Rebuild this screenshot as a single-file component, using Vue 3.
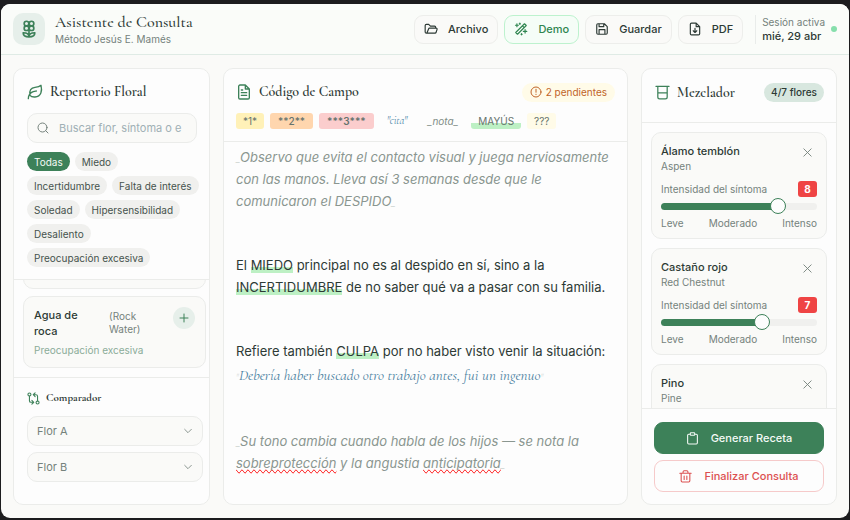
<script setup>
import { ref, reactive } from 'vue'

const actions = [
  { label: 'Archivo', icon: 'folder' },
  { label: 'Demo', icon: 'wand', active: true },
  { label: 'Guardar', icon: 'save' },
  { label: 'PDF', icon: 'pdf' },
]
const filters = ['Todas', 'Miedo', 'Incertidumbre', 'Falta de interés', 'Soledad', 'Hipersensibilidad', 'Desaliento', 'Preocupación excesiva']
const activeFilter = ref('Todas')
const legend = [
  { text: '*1*', kind: 'one' },
  { text: '**2**', kind: 'two' },
  { text: '***3***', kind: 'three' },
  { text: '"cita"', kind: 'quote' },
  { text: '_nota_', kind: 'note' },
  { text: 'MAYÚS', kind: 'caps' },
  { text: '???', kind: 'ask' },
]
const mix = reactive([
  { id: 'aspen', name: 'Álamo temblón', latin: 'Aspen', value: 8 },
  { id: 'chestnut', name: 'Castaño rojo', latin: 'Red Chestnut', value: 7 },
  { id: 'pine', name: 'Pino', latin: 'Pine', value: null },
])
const fill = (v) => ({ '--fill': ((v - 1) / 9) * 100 + '%' })
</script>

<template>
  <div class="desktop">
    <div class="app">
      <header class="topbar">
        <span class="logo">
          <svg class="icon" width="20" height="20" viewBox="0 0 24 24">
            <circle cx="9" cy="5.5" r="2.8" /><circle cx="15" cy="5.5" r="2.8" />
            <circle cx="9" cy="11" r="2.8" /><circle cx="15" cy="11" r="2.8" />
            <path d="M12 13v8.500M12 21.500c-4.500 0-7-1.500-7-5 4 0 7 1.500 7 5zM12 21.500c4.500 0 7-1.500 7-5-4 0-7 1.500-7 5z" />
          </svg>
        </span>
        <div class="brand">
          <h1>Asistente de Consulta</h1>
          <p>Método Jesús E. Mamés</p>
        </div>
        <nav class="actions">
          <button v-for="a in actions" :key="a.label" type="button" class="action" :class="{ active: a.active }">
            <svg class="icon" width="14" height="14" viewBox="0 0 24 24">
              <path v-if="a.icon === 'folder'" d="M5 19l3-7.500a1.500 1.500 0 0 1 1.300-.9H21a1.500 1.500 0 0 1 1.400 2l-1.600 5a2 2 0 0 1-1.900 1.400H4a2 2 0 0 1-2-2V6a2 2 0 0 1 2-2h4l3 3h7a2 2 0 0 1 2 2v1.500" />
              <path v-else-if="a.icon === 'wand'" d="M3 18L18 3l3 3L6 21zM14.500 6.500l3 3M5 3v5M2.500 5.500h5M19 13v6M16 16h6M10 2v2M9 3h2M13 20v2M12 21h2" />
              <path v-else-if="a.icon === 'save'" d="M5 3h11l5 5v11a2 2 0 0 1-2 2H5a2 2 0 0 1-2-2V5a2 2 0 0 1 2-2zM7 3v5h8V3M7 21v-8h10v8" />
              <path v-else d="M14 2H6a2 2 0 0 0-2 2v16a2 2 0 0 0 2 2h12a2 2 0 0 0 2-2V8zM14 2v6h6M12 11v7M9 15l3 3 3-3" />
            </svg>
            {{ a.label }}
          </button>
        </nav>
        <div class="session">
          <div>
            <p>Sesión activa</p>
            <strong>mié, 29 abr</strong>
          </div>
          <span class="dot"></span>
        </div>
      </header>

      <main class="board">
        <section class="panel">
          <div class="finder">
            <h2>
              <svg class="icon" width="16" height="16" viewBox="0 0 24 24">
                <path d="M2 22c0-4 2-7.500 5-9.500 2-1.300 4-1.500 7-2M4.500 17C3 10 6 5.500 12 5c4-.3 7-1 9-3 2 8 .5 17-9 17.500-3.500.2-6-.5-7.500-2.500z" />
              </svg>
              Repertorio Floral
            </h2>
            <label class="search">
              <svg class="icon" width="12" height="12" viewBox="0 0 24 24"><circle cx="11" cy="11" r="9" /><path d="M17.500 17.500L22 22" /></svg>
              <input type="text" placeholder="Buscar flor, síntoma o e" aria-label="Buscar flor" />
            </label>
            <div class="chips">
              <button v-for="f in filters" :key="f" type="button" :class="{ on: f === activeFilter }" @click="activeFilter = f">{{ f }}</button>
            </div>
          </div>
          <div class="flowers">
            <div class="flower passed"></div>
            <article class="flower">
              <div class="names">
                <h3>Agua de roca</h3>
                <span>(Rock Water)</span>
                <button type="button" aria-label="Añadir">
                  <svg class="icon" width="12" height="12" viewBox="0 0 24 24"><path d="M12 4v16M4 12h16" /></svg>
                </button>
              </div>
              <p>Preocupación excesiva</p>
            </article>
          </div>
          <div class="compare">
            <h4>
              <svg class="icon" width="13" height="13" viewBox="0 0 24 24">
                <circle cx="4.500" cy="4.500" r="2.800" /><circle cx="19.500" cy="19.500" r="2.800" />
                <path d="M4.500 7.500V16a3 3 0 0 0 3 3H12M9 15.500l3.500 3.500L9 22.500M19.500 16.500V8a3 3 0 0 0-3-3H12M15 1.500L11.500 5 15 8.500" />
              </svg>
              Comparador
            </h4>
            <div v-for="s in ['Flor A', 'Flor B']" :key="s" class="pick">
              <select :aria-label="s"><option>{{ s }}</option></select>
              <svg class="icon" width="10" height="10" viewBox="0 0 24 24"><path d="M4 8l8 8 8-8" /></svg>
            </div>
          </div>
        </section>

        <section class="panel">
          <div class="codehead">
            <div class="titlebar">
              <h2>
                <svg class="icon" width="16" height="16" viewBox="0 0 24 24">
                  <path d="M14 1.500H6a2 2 0 0 0-2 2v17a2 2 0 0 0 2 2h12a2 2 0 0 0 2-2V7.500zM14 1.500v6h6M8 9h2M8 13h8M8 17h8" />
                </svg>
                Código de Campo
              </h2>
              <span class="pending">
                <svg class="icon" width="12" height="12" viewBox="0 0 24 24"><circle cx="12" cy="12" r="10" /><path d="M12 6.500v6M12 16.500v.5" /></svg>
                2 pendientes
              </span>
            </div>
            <div class="legend">
              <span v-for="l in legend" :key="l.kind" :class="l.kind">{{ l.text }}</span>
            </div>
          </div>
          <div class="editor">
            <p class="aside"><i>_</i>Observo que evita el contacto visual y juega nerviosamente con las manos. Lleva así 3 semanas desde que le comunicaron el DESPIDO<i>_</i></p>
            <p>El <mark>MIEDO</mark> principal no es al despido en sí, sino a la <mark>INCERTIDUMBRE</mark> de no saber qué va a pasar con su familia.</p>
            <p>Refiere también <mark>CULPA</mark> por no haber visto venir la situación: <q><i>"</i>Debería haber buscado otro trabajo antes, fui un ingenuo<i>"</i></q></p>
            <p class="aside"><i>_</i>Su tono cambia cuando habla de los hijos — se nota la <u>sobreprotección</u> y la angustia <u>anticipatoria</u><i>_</i></p>
          </div>
        </section>

        <section class="panel">
          <div class="mixhead titlebar">
            <h2>
              <svg class="icon" width="15" height="15" viewBox="0 0 24 24"><path d="M1.500 2h21M4.500 2v17a3 3 0 0 0 3 3h9a3 3 0 0 0 3-3V2M4.500 12.500h15" /></svg>
              Mezclador
            </h2>
            <span class="count">4/7 flores</span>
          </div>
          <div class="mix">
            <article v-for="m in mix" :key="m.id" class="dose">
              <div class="dosehead">
                <div>
                  <h3>{{ m.name }}</h3>
                  <p>{{ m.latin }}</p>
                </div>
                <button type="button" aria-label="Quitar">
                  <svg class="icon" width="11" height="11" viewBox="0 0 24 24"><path d="M4 4l16 16M20 4L4 20" /></svg>
                </button>
              </div>
              <template v-if="m.value !== null">
                <div class="level">
                  <label :for="m.id">Intensidad del síntoma</label>
                  <output :for="m.id">{{ m.value }}</output>
                </div>
                <input :id="m.id" v-model.number="m.value" type="range" min="1" max="10" :style="fill(m.value)" />
                <div class="scale"><span>Leve</span><span>Moderado</span><span>Intenso</span></div>
              </template>
            </article>
          </div>
          <div class="finish">
            <button type="button" class="primary">
              <svg class="icon" width="13" height="13" viewBox="0 0 24 24"><path d="M8 4H5a2 2 0 0 0-2 2v14a2 2 0 0 0 2 2h14a2 2 0 0 0 2-2V6a2 2 0 0 0-2-2h-3M9 1.500h6a1 1 0 0 1 1 1V5a1 1 0 0 1-1 1H9a1 1 0 0 1-1-1V2.500a1 1 0 0 1 1-1z" /></svg>
              Generar Receta
            </button>
            <button type="button" class="danger">
              <svg class="icon" width="13" height="13" viewBox="0 0 24 24"><path d="M1.500 6h21M4 6v14a2 2 0 0 0 2 2h12a2 2 0 0 0 2-2V6M7.500 6V3.500a2 2 0 0 1 2-2h5a2 2 0 0 1 2 2V6M9.500 11v6.500M14.500 11v6.500" /></svg>
              Finalizar Consulta
            </button>
          </div>
        </section>
      </main>
    </div>
  </div>
</template>

<style>
body { margin: 0; background: #1c1c1e; }
</style>

<style scoped>
* { box-sizing: border-box; }
h1, h2, h3, h4, p { margin: 0; }
button, input, select { font: inherit; color: inherit; }
button { cursor: pointer; }
.icon { display: block; flex: none; fill: none; stroke: currentColor; stroke-width: 2; stroke-linecap: round; stroke-linejoin: round; }
.desktop {
  height: 100vh; padding: 4px 1px 2px; background: #1c1c1e;
  font: 10px/14px Inter, "Liberation Sans", sans-serif; color: #2d3a35;
}
.app { height: 100%; display: flex; flex-direction: column; background: #fafaf8; border-radius: 9px; overflow: hidden; }
.topbar { flex: none; display: flex; align-items: center; height: 51px; padding: 0 12px; background: #fafcf9; border-bottom: 1px solid #dfebe5; }
.logo { display: grid; place-items: center; width: 32px; height: 32px; border-radius: 10px; background: #e6efea; color: #3d8159; }
.brand { margin-left: 10px; color: #75827c; }
h1 { font: 500 16px/19px "Cormorant Garamond", "Liberation Serif", serif; color: #2d3a35; white-space: nowrap; }
.actions { display: flex; gap: 6px; margin-left: auto; }
.action { display: flex; align-items: center; gap: 10px; height: 29px; padding: 0 9px; border: 1px solid #edeeeb; border-radius: 9px; background: #fafaf8; font-size: 11px; font-weight: 500; }
.action.active { border-color: #bdf2ce; background: #f5fdf7; color: #2f8550; }
.session { display: flex; align-items: center; gap: 6px; height: 29px; margin-left: 12px; padding-left: 6px; border-left: 1px solid #e9ecea; color: #75827c; white-space: nowrap; }
.session strong { display: block; font-size: 11px; font-weight: 500; color: #2d3a35; }
.dot { width: 6px; height: 6px; border-radius: 50%; background: #86dfac; }

.board { flex: 1; min-height: 0; display: grid; grid-template-columns: 197fr 405fr 196fr; gap: 13px; padding: 13px 12px; }
.panel { min-width: 0; min-height: 0; display: flex; flex-direction: column; background: #fdfdfd; border: 1px solid #ebecea; border-radius: 10px; overflow: hidden; }
h2 { display: flex; align-items: center; gap: 7px; font: 600 14px/20px "Cormorant Garamond", "Liberation Serif", serif; white-space: nowrap; }
h2 .icon, h4 .icon { color: #3d8159; }
.titlebar { display: flex; align-items: center; justify-content: space-between; height: 20px; }

.finder { flex: none; padding: 13px 12px 12px 13px; border-bottom: 1px solid #ebecea; }
.search { display: flex; align-items: center; gap: 10px; height: 30px; margin: 11px 0 9px; padding: 0 12px 0 9px; border: 1px solid #ebecea; border-radius: 10px; background: #fafaf8; color: #75827c; }
.search input { flex: 1; min-width: 0; padding: 0; border: 0; outline: 0; background: none; font-size: 11px; }
.search input::placeholder { color: #a0b0b5; }
.chips { display: flex; flex-wrap: wrap; gap: 5px; margin-right: -3px; }
.chips button { height: 19px; padding: 0 7px; border: 0; border-radius: 10px; background: #f0f0ee; color: #46534d; }
.chips button.on { background: #3d8159; color: #f4faf6; }
.flowers { flex: 1; min-height: 0; display: flex; flex-direction: column; gap: 7px; padding: 0 3px 9px 9px; overflow: hidden; justify-content: flex-end; }
.flower { height: 72px; flex: none; padding: 10px; border: 1px solid #ebecea; border-radius: 10px; background: #fafaf8; }
.flower.passed { height: 20px; }
.names { display: grid; grid-template-columns: 1fr 58px 22px; align-items: start; column-gap: 6px; margin-bottom: 4px; }
h3 { font-size: 11px; font-weight: 500; line-height: 16px; }
.names span { line-height: 13px; padding-top: 3px; width: 40px; color: #75827c; }
.names button { display: grid; place-items: center; width: 22px; height: 22px; padding: 0; border: 0; border-radius: 50%; background: #e6efea; color: #3d8159; }
.flower p { color: #8bac98; }
.compare { flex: none; display: flex; flex-direction: column; gap: 6px; height: 127px; padding: 12px 6px 0 13px; border-top: 1px solid #ebecea; }
h4 { display: flex; align-items: center; gap: 6px; margin-bottom: 4px; font: 700 11px/16px "Cormorant Garamond", "Liberation Serif", serif; }
.pick { display: grid; align-items: center; color: #75827c; }
.pick select { grid-area: 1 / 1; width: 100%; height: 30px; padding: 0 9px; border: 1px solid #ebecea; border-radius: 10px; background: #fafaf8; appearance: none; font-size: 11px; }
.pick .icon { grid-area: 1 / 1; justify-self: end; margin-right: 10px; pointer-events: none; }

.codehead { flex: none; padding: 13px 12px 12px; border-bottom: 1px solid #ebecea; }
.pending { display: flex; align-items: center; gap: 4px; height: 19px; padding: 0 8px; border-radius: 10px; background: #fffbe8; color: #bf6428; }
.legend { display: flex; gap: 6px; margin-top: 11px; color: #66736d; line-height: 16px; }
.legend span { padding: 0 7px; border-radius: 3px; }
.legend .one { background: #fff1b8; }
.legend .two { padding: 0 8px; background: #ffd6ae; font-weight: 500; }
.legend .three { padding: 0 8px; background: #fbcdcd; font-weight: 600; }
.legend .quote { font: italic 11px/16px "Cormorant Garamond", "Liberation Serif", serif; color: #4a86a8; }
.legend .note { font-style: italic; color: #808d87; }
.legend .caps { background: linear-gradient(transparent 60%, #bdf0c4 60%); }
.legend .ask { background: #fffbe8; }
.editor { flex: 1; min-height: 0; display: flex; flex-direction: column; gap: 42px; padding: 4px 12px; overflow: hidden; font-size: 13px; line-height: 22px; }
.aside { font-style: italic; color: #8a9690; }
.editor i { font-size: 9px; line-height: 0; color: #cdd4d0; }
.editor mark { color: inherit; background: linear-gradient(transparent 60%, #bdf0c4 60%); }
.editor q { display: block; quotes: none; font: italic 15px/26px "Cormorant Garamond", "Liberation Serif", serif; color: #4a7f9f; white-space: nowrap; }
.editor u { text-decoration: spelling-error; }

.mixhead { flex: none; height: 54px; padding: 0 12px 6px 13px; border-bottom: 1px solid #ebecea; }
.count { padding: 0 7px; border-radius: 10px; background: #d8e7df; font-weight: 500; line-height: 19px; }
.mix { flex: 1; min-height: 0; display: flex; flex-direction: column; gap: 9px; padding: 9px 9px 0; overflow: hidden; }
.dose { flex: none; height: 107px; padding: 10px 9px 0; border: 1px solid #ebecea; border-radius: 10px; background: #fafaf8; color: #75827c; }
.dose h3 { color: #2d3a35; }
.dosehead { display: flex; justify-content: space-between; align-items: flex-start; }
.dosehead button { padding: 4px; border: 0; background: none; }
.level { display: flex; justify-content: space-between; align-items: center; margin-top: 8px; }
.level output { width: 19px; border-radius: 3px; background: #ef4444; color: #fff; font-weight: 700; line-height: 16px; text-align: center; }
.dose input { display: block; width: 100%; height: 16px; margin: 1px 0 2px; appearance: none; background: none; }
.dose input::-webkit-slider-runnable-track { height: 7px; border-radius: 4px; background: linear-gradient(90deg, #3d8159 var(--fill), #f0f0ee var(--fill)); }
.dose input::-webkit-slider-thumb { appearance: none; width: 16px; height: 16px; margin-top: -5px; border: 1px solid #3d8159; border-radius: 50%; background: #fdfdfd; }
.scale { display: flex; justify-content: space-between; }
.finish { flex: none; display: flex; flex-direction: column; gap: 6px; padding: 13px 12px 12px; border-top: 1px solid #ebecea; }
.finish button { display: flex; align-items: center; justify-content: center; gap: 12px; height: 32px; padding: 0; border: 1px solid #f6caca; border-radius: 9px; background: #fdfdfd; color: #dc5050; font-size: 11px; font-weight: 500; }
.finish .primary { border-color: #3d8159; background: #3d8159; color: #f4faf6; }
</style>
